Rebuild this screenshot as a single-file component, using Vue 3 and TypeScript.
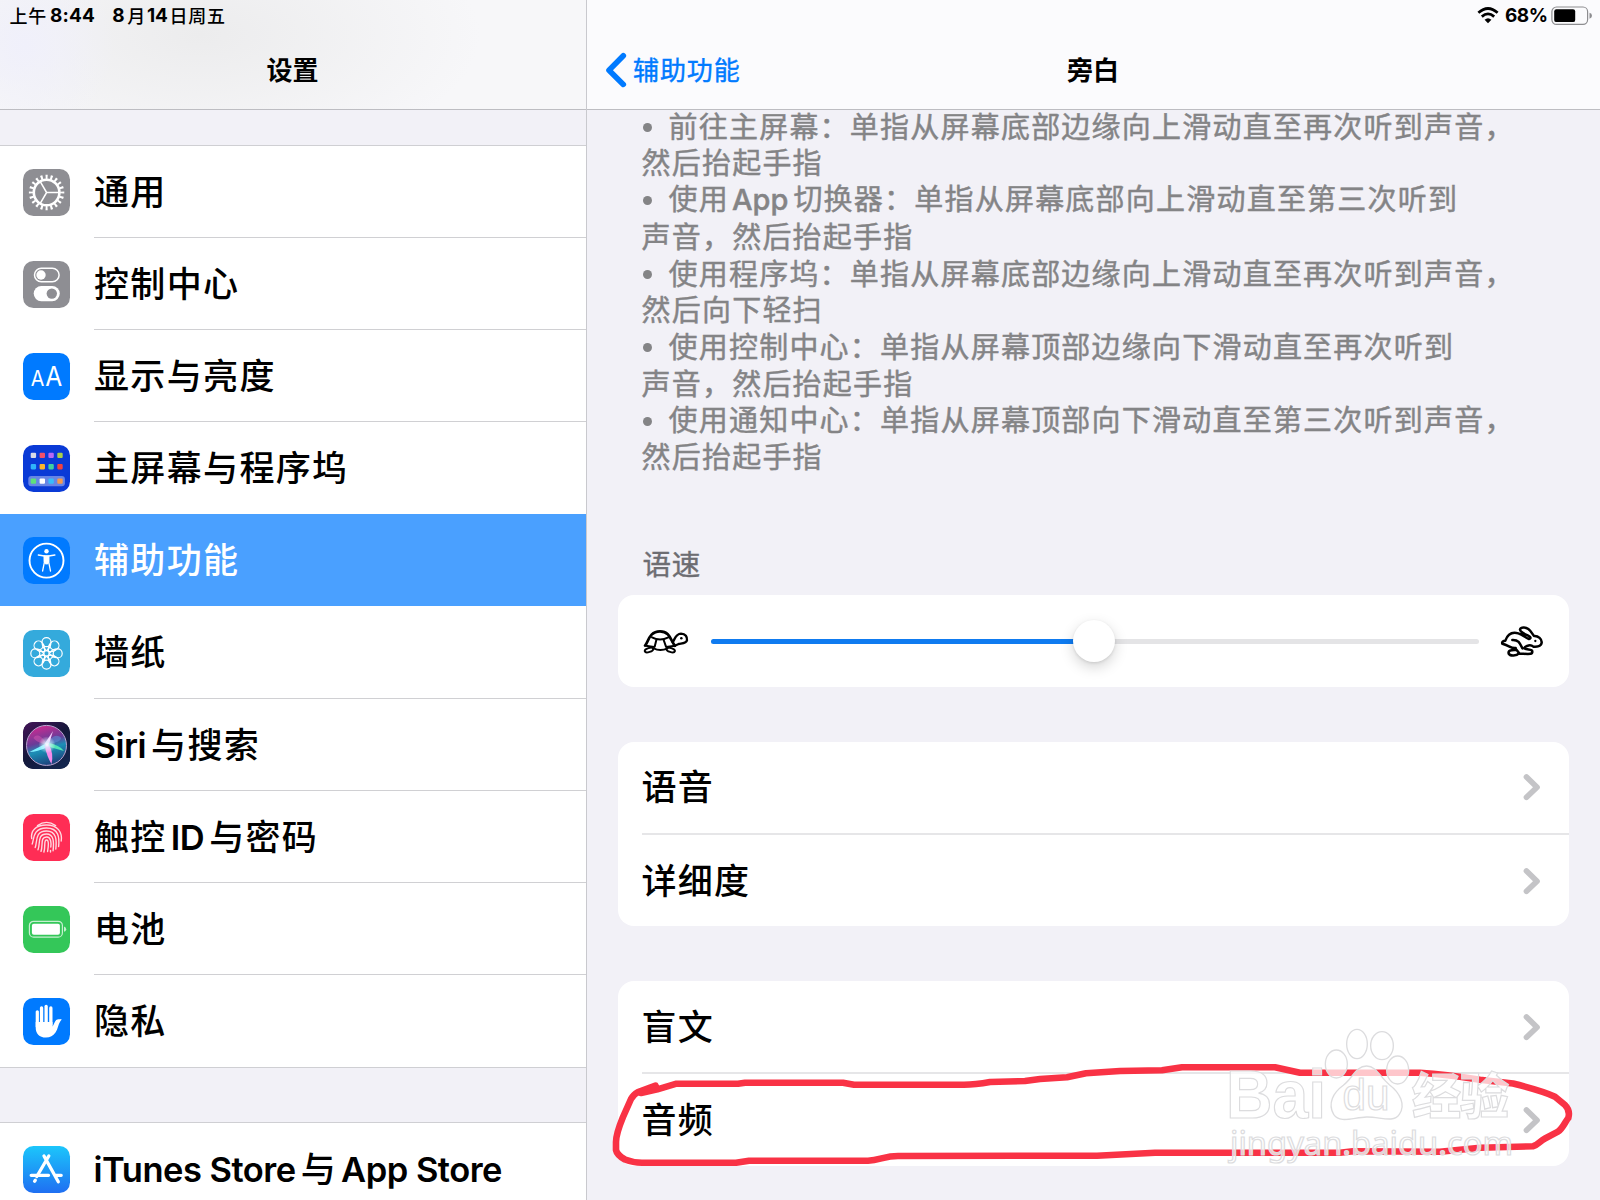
<script setup lang="ts">
interface Segment {
  text: string
  latin: boolean
}
interface MenuItem {
  id: string
  label: string
  bg: string
}
interface Gesture {
  first: string
  second: string
}

const menu: MenuItem[] = [
  { id: 'general', label: '通用', bg: '#8e8e93' },
  { id: 'control', label: '控制中心', bg: '#8e8e93' },
  { id: 'display', label: '显示与亮度', bg: '#007aff' },
  { id: 'home', label: '主屏幕与程序坞', bg: '#0a3ad6' },
  { id: 'access', label: '辅助功能', bg: '#007aff' },
  { id: 'wallpaper', label: '墙纸', bg: '#34aadc' },
  { id: 'siri', label: 'Siri与搜索', bg: '#16143a' },
  { id: 'touch', label: '触控ID与密码', bg: '#ff2d55' },
  { id: 'battery', label: '电池', bg: '#34c759' },
  { id: 'privacy', label: '隐私', bg: '#007aff' },
]
const storeItem: MenuItem = {
  id: 'store',
  label: 'iTunes Store与App Store',
  bg: 'linear-gradient(#1cc6fb, #1f6ff2)',
}
const sections = [menu, [storeItem]]

const gestures: Gesture[] = [
  { first: '前往主屏幕：单指从屏幕底部边缘向上滑动直至再次听到声音，', second: '然后抬起手指' },
  { first: '使用App切换器：单指从屏幕底部向上滑动直至第三次听到', second: '声音，然后抬起手指' },
  { first: '使用程序坞：单指从屏幕底部边缘向上滑动直至再次听到声音，', second: '然后向下轻扫' },
  { first: '使用控制中心：单指从屏幕顶部边缘向下滑动直至再次听到', second: '声音，然后抬起手指' },
  { first: '使用通知中心：单指从屏幕顶部向下滑动直至第三次听到声音，', second: '然后抬起手指' },
]
const groups: string[][] = [
  ['语音', '详细度'],
  ['盲文', '音频'],
]

const appDots = [
  ['#d8dbe6', '#f2506a', '#b768f5', '#a9cf4a'],
  ['#2fb4fb', '#fbb52b', '#3fcfa0', '#f2413f'],
  ['#5fe07a', '#ffffff', '#36bdfb', '#f59a4c'],
]
const dotX = [7.7, 16.6, 25.4, 34.3]
const dotY = [7.7, 19, 33.4]
const petals = [0, 45, 90, 135, 180, 225, 270, 315]

// Splits mixed labels so Latin runs can carry their own face and spacing.
function split(label: string): Segment[] {
  return (label.match(/[A-Za-z0-9: ]+|[^A-Za-z0-9: ]+/g) ?? []).map((text) => ({
    text,
    latin: /[A-Za-z0-9]/.test(text),
  }))
}
</script>

<template>
  <div class="screen">
    <aside class="sidebar">
      <header class="bar bar-left">
        <div class="status">
          <span>上午</span><b class="time">8:44</b><b class="day">8</b><span>月</span><b class="num">14</b><span>日周五</span>
        </div>
        <h1 class="title">设置</h1>
      </header>
      <nav class="menu">
        <ul v-for="(section, s) in sections" :key="s" class="section">
          <li v-for="item in section" :key="item.id" class="row" :class="{ active: item.id === 'access' }">
            <div class="icon" :style="{ background: item.bg }">
              <svg viewBox="0 0 47 47" width="47" height="47">
                <g v-if="item.id === 'general'" fill="none" stroke="#fff">
                  <circle cx="23.6" cy="23.5" r="12.8" stroke-width="2.6" />
                  <circle cx="23.6" cy="23.5" r="15.6" stroke-width="4.2" pathLength="200" stroke-dasharray="4.2 5.8" stroke-dashoffset="2.1" />
                  <path d="M23.6 23.5H36M23.6 23.5L17.4 12.8M23.6 23.5L17.4 34.2" stroke-width="1.5" />
                </g>
                <g v-else-if="item.id === 'control'">
                  <rect x="11.5" y="7.2" width="24.6" height="13.6" rx="6.8" fill="none" stroke="#fff" stroke-width="1.5" />
                  <circle cx="18" cy="14" r="4.7" fill="#fff" />
                  <rect x="10.7" y="25" width="26.1" height="15.2" rx="7.6" fill="#fff" />
                  <circle cx="28.8" cy="32.6" r="5.2" fill="#8e8e93" />
                </g>
                <g v-else-if="item.id === 'display'" fill="#fff" class="aa">
                  <text x="7.8" y="33.3" font-size="21" textLength="13.6" lengthAdjust="spacingAndGlyphs">A</text>
                  <text x="22.2" y="33.3" font-size="27" textLength="17" lengthAdjust="spacingAndGlyphs">A</text>
                </g>
                <g v-else-if="item.id === 'home'">
                  <rect x="5.3" y="31" width="36.6" height="10.2" rx="3" fill="#fff" opacity=".38" />
                  <template v-for="(line, r) in appDots" :key="r">
                    <rect v-for="(c, i) in line" :key="i" :x="dotX[i]" :y="dotY[r]" width="5.4" height="5.4" rx="1.1" :fill="c" />
                  </template>
                </g>
                <g v-else-if="item.id === 'access'" fill="none" stroke="#fff" stroke-linecap="round" stroke-linejoin="round">
                  <circle cx="23.5" cy="23.6" r="17" stroke-width="1.9" />
                  <circle cx="23.5" cy="14.2" r="2.2" fill="#fff" stroke="none" />
                  <path d="M15.3 18L21.4 19V25.2L19.6 34M31.9 18L25.7 19V25.2L27.5 34" stroke-width="1.3" />
                  <path d="M21.4 18.6H25.7V25L24.8 27H22.3L21.4 25Z" fill="#fff" stroke-width=".8" />
                </g>
                <g v-else-if="item.id === 'wallpaper'" fill="none" stroke="#fff" stroke-width="1.2">
                  <g v-for="a in petals" :key="a" :transform="`rotate(${a} 23.5 23.4)`">
                    <circle cx="23.5" cy="12.2" r="4.5" />
                    <path d="M19.3 14C19.3 17.7 21.500 19 23.5 20.6C25.500 19 27.7 17.7 27.7 14" />
                  </g>
                  <circle cx="23.5" cy="23.4" r="2.7" />
                </g>
                <g v-else-if="item.id === 'siri'">
                  <defs>
                    <linearGradient id="siri-bg" x1="0" y1="0" x2=".7" y2="1">
                      <stop offset="0" stop-color="#451458" /><stop offset=".55" stop-color="#14183a" /><stop offset="1" stop-color="#14264e" />
                    </linearGradient>
                    <linearGradient id="siri-orb" x1=".3" y1="0" x2=".6" y2="1">
                      <stop offset="0" stop-color="#d02a90" /><stop offset=".4" stop-color="#6a3b98" /><stop offset=".6" stop-color="#1b8fb6" /><stop offset="1" stop-color="#1d3c78" />
                    </linearGradient>
                    <radialGradient id="siri-glow"><stop offset="0" stop-color="#fff" /><stop offset=".35" stop-color="#d9f3ff" stop-opacity=".7" /><stop offset="1" stop-color="#fff" stop-opacity="0" /></radialGradient>
                  </defs>
                  <rect width="47" height="47" fill="url(#siri-bg)" />
                  <circle cx="23.5" cy="23.4" r="20" fill="url(#siri-orb)" stroke="#b9a5cf" stroke-width="1" />
                  <path d="M24 23C19 12 12 12 10.500 16C13 20 19 21 24 23Z" fill="#e05cb4" opacity=".45" />
                  <path d="M24 23C28 13 35 12 38 16C38 20 30 21 24 23Z" fill="#5a9ae0" opacity=".5" />
                  <path d="M24 21L6.500 30Q14 30 25 25Z" fill="#7df0ff" />
                  <path d="M23 24L41 29Q37 23 24 20.500Z" fill="#4fe3b4" />
                  <path d="M21.500 23Q24 35 28.500 42Q31 31 25.500 22Z" fill="#f48bea" />
                  <path d="M26 22L30 9L21.500 22Z" fill="#f3ccff" />
                  <circle cx="24" cy="22.800" r="8.500" fill="url(#siri-glow)" />
                </g>
                <g v-else-if="item.id === 'touch'" fill="none" stroke="#ffd9e0" stroke-width="1.4" stroke-linecap="round">
                  <path d="M14.500 11.600Q23.500 5.200 32.600 11.600" />
                  <path d="M8.700 24.500C7.500 17 12.500 11 23.500 11C34.500 11 39.500 18 38.200 27" />
                  <path d="M9.200 30C11.200 25 9.500 14 23.500 14C36 14 36.500 24 35.600 32.500" />
                  <path d="M12.200 33.500C14.500 28 11.500 17 23.500 17C33.500 17 33.800 26 32.800 35" />
                  <path d="M15 35.800C17.500 30 14 20 23.500 20C31 20 31 28 30.100 36.800" />
                  <path d="M18 37.400C20.300 31 17 23 23.500 23C28.500 23 28.200 30 27.800 33" />
                  <path d="M20.900 38C22.800 32 20.500 26 23.500 26C26.300 26 25.300 33 24.600 37.500" />
                  <path d="M27.500 36.500V38" />
                </g>
                <g v-else-if="item.id === 'battery'">
                  <rect x="6.400" y="15.300" width="33" height="15.800" rx="4.200" fill="none" stroke="#c6f0d0" stroke-width="1.200" />
                  <rect x="8.900" y="17.800" width="28" height="10.900" rx="1.900" fill="#fff" />
                  <path d="M41 20.600Q43.200 21.200 43.200 23.200T41 25.800Z" fill="#c6f0d0" />
                </g>
                <g v-else-if="item.id === 'privacy'" fill="#fff">
                  <rect x="12.700" y="12.200" width="3.200" height="18" rx="1.600" />
                  <rect x="16.900" y="8.300" width="3.300" height="20" rx="1.600" />
                  <rect x="21.500" y="6.800" width="3.300" height="20" rx="1.600" />
                  <rect x="26.200" y="8.300" width="3.300" height="20" rx="1.600" />
                  <path d="M12.700 24H29.500V28.500C30.900 27 31.500 23.500 33.200 22.100C34.500 21 36.800 21.300 38.300 20.900C38.800 21.400 38.200 22.200 37.500 22.900C35 26 35 31 32.500 34.500C30 38 27.200 39.600 23 39.600C16 39.600 12.700 35.500 12.700 29.500Z" />
                </g>
                <g v-else fill="none" stroke="#fff" stroke-width="3.300" stroke-linecap="round">
                  <path d="M21 10L35.300 35.800M25.800 10L13.800 30.500M11.600 35.200L12.300 34.300" />
                  <path d="M8.200 29.300H25.500M33 29.300H38.200" />
                </g>
              </svg>
            </div>
            <div class="label">
              <span v-for="(seg, i) in split(item.label)" :key="i" :class="{ latin: seg.latin }">{{ seg.text }}</span>
            </div>
          </li>
        </ul>
      </nav>
    </aside>

    <main class="detail">
      <header class="bar bar-right">
        <div class="status status-right">
          <svg class="wifi" viewBox="0 0 64 48" width="22" height="16.500">
            <path d="M4 17Q32 -8 60 17M14 28Q32 12 50 28" fill="none" stroke="#000" stroke-width="8" />
            <path d="M22 37Q32 28 42 37L32 47Z" />
          </svg>
          <b class="pct">68%</b>
          <svg viewBox="0 0 42 20" width="42" height="20">
            <rect x=".9" y="1" width="35.700" height="17.400" rx="4.600" fill="none" stroke="#8d8d90" stroke-width="1.200" />
            <rect x="3.200" y="3.300" width="21" height="12.800" rx="2.200" />
            <path d="M38.500 6.800Q41 7.500 41 9.700T38.500 12.700Z" fill="#8d8d90" />
          </svg>
        </div>
        <div class="back">
          <svg viewBox="0 0 22 36" width="22" height="36">
            <path d="M18.300 3.800L4 18.200L18.300 32.400" fill="none" stroke="#007aff" stroke-width="5.600" stroke-linecap="round" stroke-linejoin="round" />
          </svg>
          <span>辅助功能</span>
        </div>
        <h1 class="title">旁白</h1>
      </header>

      <section class="content">
        <ul class="gestures">
          <li v-for="g in gestures" :key="g.first">
            <p class="line first">
              <i class="bullet"></i>
              <span><span v-for="(seg, i) in split(g.first)" :key="i" :class="{ latin: seg.latin }">{{ seg.text }}</span></span>
            </p>
            <p class="line second">{{ g.second }}</p>
          </li>
        </ul>

        <h2 class="caption">语速</h2>
        <div class="card slider">
          <svg viewBox="130 265 138 74" width="46" height="24.700" fill="none" stroke="#000" stroke-width="7" stroke-linecap="round" stroke-linejoin="round">
            <path d="M136 315C146 305 148 272 181 272C213 272 213 303 226 315" stroke-width="8" />
            <path d="M157 290Q181 303 206 290M170 298L165 318M192 298L199 318M162 323Q181 333 204 323M138 315L163 319M200 319L226 315" stroke-width="6" />
            <ellipse cx="148" cy="328" rx="13" ry="6" transform="rotate(-18 148 328)" stroke-width="6" />
            <ellipse cx="213" cy="328" rx="13" ry="6" transform="rotate(18 213 328)" stroke-width="6" />
            <path d="M219 304C226 296 227 280 244 279C258 279 263 289 262 299C260 309 246 308 237 310L224 316" />
            <circle cx="245" cy="293" r="3.800" fill="#000" stroke="none" />
          </svg>
          <div class="track"><div class="fill"></div><div class="thumb"></div></div>
          <svg viewBox="1261 131 132 99" width="44" height="33" fill="none" stroke="#000" stroke-width="7.500" stroke-linecap="round" stroke-linejoin="round">
            <path d="M1308 200C1294 202 1288 192 1268 187C1266 182 1270 178 1277 178C1284 158 1298 151 1316 156C1330 161 1338 169 1348 173C1356 171 1352 166 1344 162C1330 156 1320 151 1321 144C1324 136 1338 137 1346 143C1355 150 1358 158 1363 164C1376 163 1387 173 1386 184C1385 195 1372 197 1361 196C1353 189 1340 192 1333 201C1342 207 1358 202 1358 211C1358 220 1349 218 1320 217L1308 202" />
            <path d="M1298 176C1317 175 1321 186 1328 201" />
            <path d="M1308 206C1292 205 1285 209 1287 217C1291 225 1311 224 1318 216" />
            <circle cx="1367" cy="179" r="3.500" fill="#000" stroke="none" />
          </svg>
        </div>

        <div v-for="(group, g) in groups" :key="g" class="card list">
          <div v-for="name in group" :key="name" class="option">
            <span>{{ name }}</span>
            <svg viewBox="0 0 18 28" width="18" height="28">
              <path d="M3.500 4L14 14.200L3.500 24.200" fill="none" stroke="#c4c4c7" stroke-width="5.700" stroke-linecap="round" stroke-linejoin="round" />
            </svg>
          </div>
        </div>
      </section>
    </main>

    <svg class="overlay" viewBox="0 0 1600 1200" width="1600" height="1200">
      <path
        d="M655.500 1085.700L638 1092Q633 1095 631 1099L623 1117Q616 1134 616 1142V1150Q617 1155 625 1159.500Q633 1162.700 642 1162.700H736L749 1160.700H868C880 1160 885 1156 898 1156L1097 1155.700L1155 1152.700H1340L1353 1151.300L1440 1151.700L1480 1147.700L1533 1146.300C1538 1145 1540 1141 1545 1138.500L1558 1131.700C1563 1128 1565 1122 1568.300 1118C1570 1112 1568 1108 1565 1105L1555 1096.700C1545 1092 1527 1087 1513 1083.500L1480 1079.700Q1445 1074 1420 1072.700H1300L1275 1067.300H1182L1162 1070.300L1120 1071L1086 1073.300L1067 1077.300L1040 1079L1025 1081L990 1082Q975 1084.700 964 1084.700H854L843 1082.700H745L738 1083.700H676.500L657.400 1089.300L641 1093"
        fill="none" stroke="#f93245" stroke-width="6.600" stroke-linecap="round" stroke-linejoin="round"
      />
      <g class="mark">
        <g transform="translate(1180 960) scale(.33333)" stroke-width="4">
          <ellipse cx="469" cy="312" rx="33" ry="42" />
          <ellipse cx="531" cy="252" rx="31" ry="44" />
          <ellipse cx="606" cy="257" rx="34" ry="42" />
          <ellipse cx="653" cy="330" rx="33" ry="42" />
          <path d="M560 318C590 318 600 352 628 374C660 398 678 435 658 463C640 490 600 470 560 471C520 472 480 492 461 463C442 430 460 398 490 376C518 354 528 318 560 318Z" />
        </g>
        <text class="bai" x="1226" y="1117.800" textLength="100" lengthAdjust="spacingAndGlyphs">Bai</text>
        <text class="du" x="1342.500" y="1109.500" textLength="47" lengthAdjust="spacingAndGlyphs">du</text>
        <text class="jy" x="1412" y="1113.500" textLength="97">经验</text>
        <text class="url" x="1230" y="1155" textLength="283" lengthAdjust="spacingAndGlyphs">jingyan.baidu.com</text>
      </g>
    </svg>
  </div>
</template>

<style>
body {
  margin: 0;
  overflow: hidden;
}
</style>

<style scoped>
.screen {
  position: relative;
  display: flex;
  width: 1600px;
  height: 1200px;
  overflow: hidden;
  background: #f2f1f7;
  color: #000;
  font-family: 'Noto Sans CJK SC', sans-serif;
}
ul,
p,
h1,
h2 {
  margin: 0;
  padding: 0;
  list-style: none;
  font-weight: 500;
}
svg {
  display: block;
  flex: none;
}
.sidebar {
  box-sizing: border-box;
  width: 587px;
  border-right: 1px solid #c9c9ce;
  overflow: hidden;
}
.bar {
  box-sizing: border-box;
  height: 110px;
  border-bottom: 1px solid #bdbdc2;
  display: flex;
  flex-direction: column;
}
.bar-left {
  background:
    radial-gradient(ellipse 90px 90px at 25px 45px, #f0f0fb, transparent),
    radial-gradient(ellipse 280px 130px at 200px 35px, #ececed, transparent),
    #f7f7f9;
}
.bar-right {
  position: relative;
  background: #fbfbfd;
}
.status {
  display: flex;
  align-items: center;
  height: 31px;
  padding-left: 9.500px;
  font-size: 18px;
  line-height: 31px;
  letter-spacing: 0.700px;
  font-weight: 500;
}
.status span {
  height: 32px;
  line-height: 30px;
}
.status b {
  font-family: Inter, sans-serif;
  font-weight: 700;
  font-size: 19px;
}
.time {
  margin: 0 17px 0 3px;
  letter-spacing: 0.200px;
}
.day {
  margin-right: 2px;
}
.num {
  margin: 0 2px 0 1px;
  letter-spacing: -0.200px;
}
.status-right {
  justify-content: flex-end;
  padding: 0 7.500px 0 0;
}
.wifi {
  margin-right: 6px;
}
.status .pct {
  margin-right: 3px;
  letter-spacing: -0.500px;
}
.title {
  height: 78px;
  line-height: 76px;
  padding-right: 1px;
  text-align: center;
  font-size: 26px;
  font-weight: 700;
}
.back {
  position: absolute;
  left: 18px;
  top: 52px;
  display: flex;
  align-items: center;
  gap: 6px;
  height: 36px;
  color: #007aff;
  font-size: 26px;
  letter-spacing: 0.900px;
  -webkit-text-stroke: 0.400px #007aff;
}
.back span {
  height: 39px;
  line-height: 36px;
}
.menu {
  padding-top: 35px;
}
.section {
  background: #fff;
  border-top: 1px solid #cfcfd3;
  border-bottom: 1px solid #cfcfd3;
  margin-bottom: 54px;
}
.row {
  display: flex;
  height: 92.100px;
  padding-left: 23px;
  align-items: center;
}
.icon {
  flex: none;
  width: 47px;
  height: 47px;
  margin-top: 1px;
  border-radius: 10.500px;
  overflow: hidden;
}
.aa text {
  font-family: Inter, sans-serif;
  font-weight: 400;
}
.label {
  box-sizing: border-box;
  flex: 1;
  height: 100%;
  margin-left: 24px;
  border-bottom: 1px solid #d0d0d3;
  font-size: 35px;
  line-height: 88px;
  letter-spacing: 1.350px;
  font-weight: 500;
  white-space: nowrap;
}
.row:last-child .label,
.row.active .label {
  border-bottom-color: transparent;
}
.row:has(+ .active) .label {
  border-bottom-color: transparent;
}
.row.active {
  background: #4aa0ff;
  color: #fff;
}
.latin {
  font-family: Inter, sans-serif;
  letter-spacing: -0.500px;
  margin: 0 5px 0 4px;
}
.label .latin {
  font-size: 34.500px;
  font-weight: 600;
}
.label .latin:first-child {
  margin-left: -0.500px;
}
.detail {
  flex: 1;
}
.content {
  display: flex;
  flex-direction: column;
  padding: 0 31px;
}
.gestures {
  margin-top: -3.500px;
  padding: 0 0 0 23.500px;
  color: #848486;
}
.gestures li {
  height: 73.400px;
}
.line {
  display: flex;
  align-items: center;
  font-size: 29px;
  line-height: 36.700px;
  letter-spacing: 1.220px;
  font-weight: 400;
  white-space: nowrap;
  -webkit-text-stroke: 0.450px #848486;
}
.first {
  height: 37.200px;
}
.second {
  height: 36.200px;
}
.bullet {
  width: 9px;
  height: 9px;
  margin: 5px 16.500px 0 1.500px;
  border-radius: 50%;
  background: #848486;
}
.line .latin {
  font-weight: 500;
  font-size: 29px;
  letter-spacing: 0;
  margin: 0 5px 0 3px;
}
.caption {
  margin-top: 69.500px;
  padding-left: 24.500px;
  height: 52px;
  line-height: 39px;
  font-size: 28.500px;
  letter-spacing: 0.800px;
  font-weight: 400;
  color: #6d6d72;
  -webkit-text-stroke: 0.400px #6d6d72;
}
.card {
  width: 951px;
  border-radius: 16px;
  background: #fff;
}
.slider {
  box-sizing: border-box;
  display: flex;
  align-items: center;
  justify-content: space-between;
  height: 92px;
  padding: 1px 25px 0;
}
.track {
  position: relative;
  width: 768px;
  height: 5px;
  border-radius: 3px;
  background: #e4e4e6;
}
.fill {
  width: 50%;
  height: 100%;
  border-radius: 3px;
  background: #0f7bf0;
}
.thumb {
  position: absolute;
  left: 362.500px;
  top: -19px;
  width: 42px;
  height: 42px;
  border-radius: 50%;
  background: #fff;
  box-shadow: 0 5px 14px rgba(0, 0, 0, 0.170), 0 1px 3px rgba(0, 0, 0, 0.100);
}
.list {
  margin-top: 55px;
}
.option {
  box-sizing: border-box;
  display: flex;
  align-items: center;
  justify-content: space-between;
  height: 91.400px;
  margin-left: 23.500px;
  padding-right: 28px;
  font-size: 35px;
  letter-spacing: 1.200px;
  font-weight: 500;
}
.option span {
  height: 54px;
  line-height: 50px;
}
.option:first-child {
  height: 93px;
  border-bottom: 2px solid #e6e6e8;
}
.overlay {
  position: absolute;
  left: 0;
  top: 0;
}
.mark {
  fill: rgba(255, 255, 255, 0.720);
  stroke: #dcdcde;
}
.mark text {
  stroke-width: 1.200px;
}
.bai {
  font: 700 68px 'Liberation Sans', sans-serif;
}
.du {
  font: 400 44px 'Liberation Sans', sans-serif;
}
.jy {
  font: 900 49px 'Noto Sans CJK SC', sans-serif;
}
.url {
  font: 400 32px 'Noto Sans', sans-serif;
}
</style>
